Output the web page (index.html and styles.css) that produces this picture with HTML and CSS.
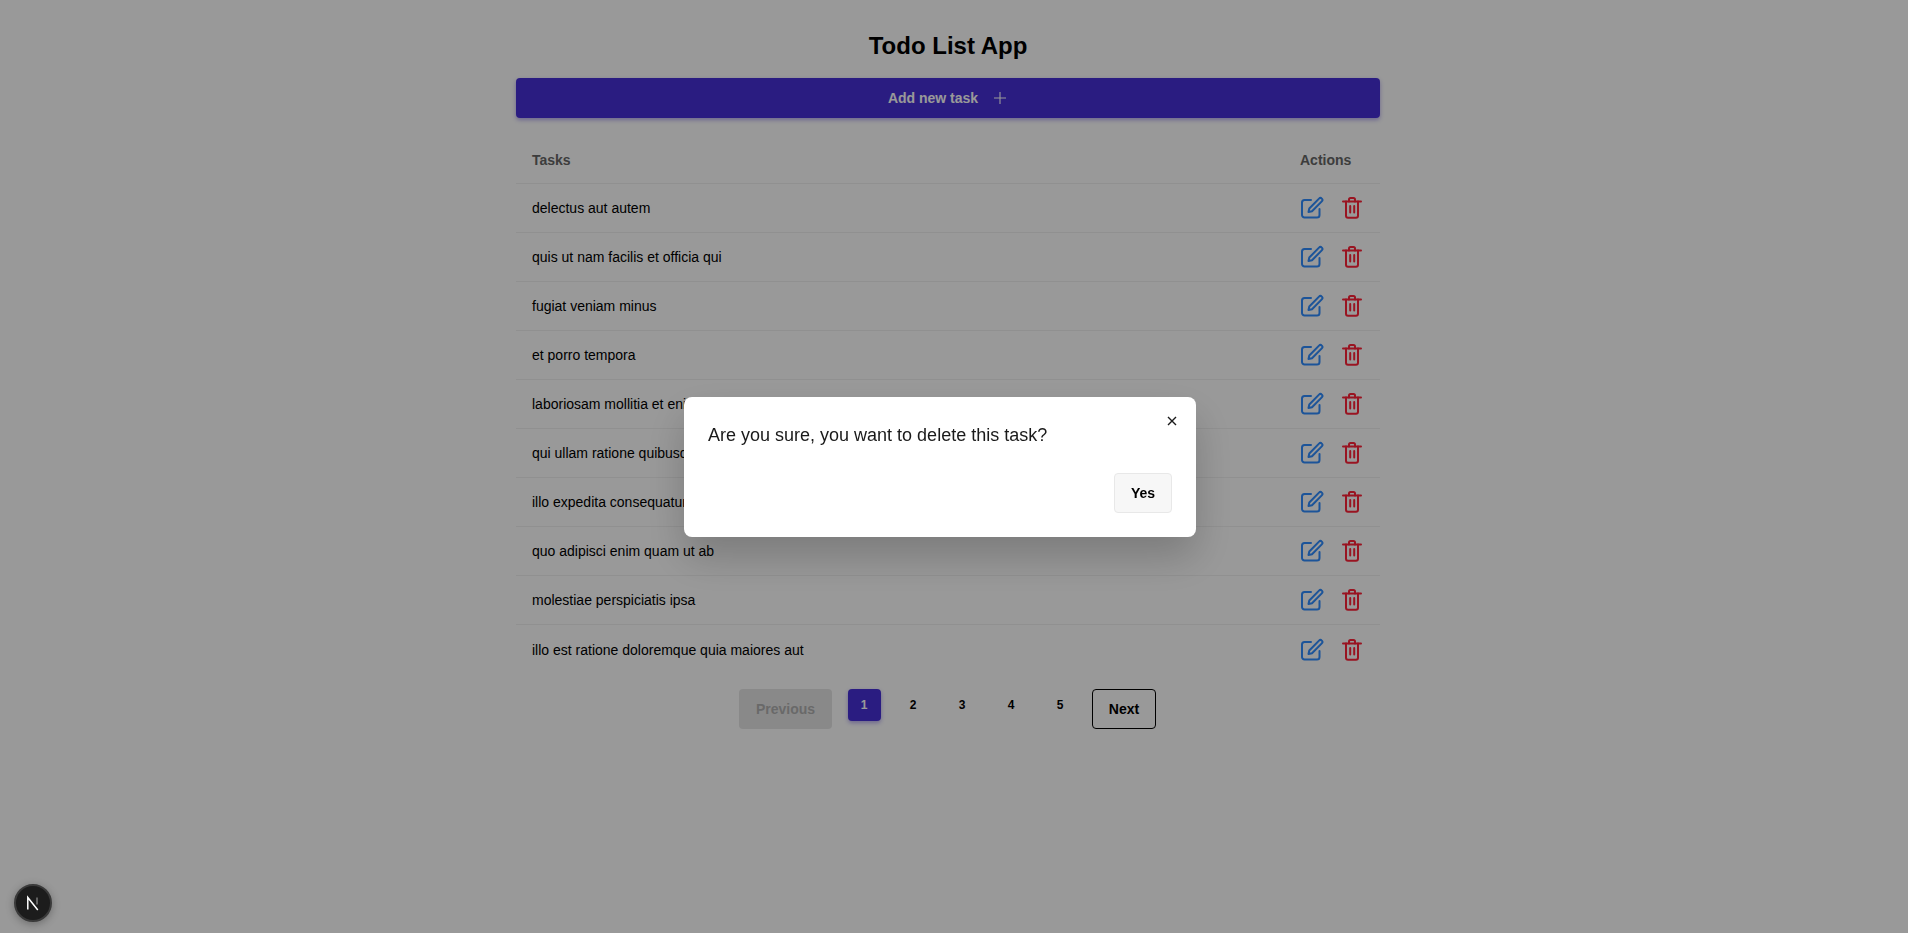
FILE: index.html
```html
<!DOCTYPE html>
<html lang="en">
<head>
    <meta charset="UTF-8">
    <title>Todo List App</title>
    <link rel="stylesheet" href="styles.css">
</head>
<body>
    <main class="container">
        <h1>Todo List App</h1>
        <button class="add-btn">Add new task
            <svg width="16" height="16" viewBox="0 0 16 16" fill="none" stroke="currentColor" stroke-width="1.1"><path d="M8 2v12M2 8h12"/></svg>
        </button>

        <div class="table-head">
            <span>Tasks</span>
            <span class="actions-title">Actions</span>
        </div>

        <div id="rows"></div>

        <div class="pagination">
            <button class="prev">Previous</button>
            <div class="pages">
                <button class="page active">1</button>
                <button class="page">2</button>
                <button class="page">3</button>
                <button class="page">4</button>
                <button class="page">5</button>
            </div>
            <button class="next">Next</button>
        </div>
    </main>

    <div class="overlay">
        <div class="modal">
            <svg class="close" width="12" height="12" viewBox="0 0 12 12" fill="none" stroke="#1a1a1a" stroke-width="1.4"><path d="M2 2l8 8M10 2l-8 8"/></svg>
            <p>Are you sure, you want to delete this task?</p>
            <div class="modal-foot">
                <button class="yes">Yes</button>
            </div>
        </div>
    </div>

    <div class="next-badge">
        <svg width="16" height="16" viewBox="0 0 16 16" fill="none"><path d="M2.8 14.5V2.5l10 12.5" stroke="#fff" stroke-width="1.5"/><path d="M12 2.5v7" stroke="#888" stroke-width="1.3"/></svg>
    </div>

    <script>
        const tasks = [
            'delectus aut autem',
            'quis ut nam facilis et officia qui',
            'fugiat veniam minus',
            'et porro tempora',
            'laboriosam mollitia et enim quasi adipisci quia provident illum',
            'qui ullam ratione quibusdam voluptatem quia omnis',
            'illo expedita consequatur quia in',
            'quo adipisci enim quam ut ab',
            'molestiae perspiciatis ipsa',
            'illo est ratione doloremque quia maiores aut'
        ];

        const editIcon = '<svg width="24" height="24" viewBox="0 0 24 24" fill="none" stroke="#2f8cff" stroke-width="2" stroke-linecap="round" stroke-linejoin="round"><path d="M11 4H4.500A2.500 2.500 0 0 0 2 6.500v12.500a2.500 2.500 0 0 0 2.500 2.500H17a2.500 2.500 0 0 0 2.500-2.500v-6"/><path d="M19 2.600a1.900 1.900 0 0 1 2.800 2.800L12 15.200 8.500 16l.8-3.500z"/></svg>';
        const trashIcon = '<svg width="24" height="24" viewBox="0 0 24 24" fill="none" stroke="#ff2238" stroke-width="2" stroke-linecap="round" stroke-linejoin="round"><path d="M3 5.500h18"/><path d="M6 5.500V19.700a2 2 0 0 0 2 2h8a2 2 0 0 0 2-2V5.500"/><path d="M9 5.500V3.500A1.500 1.500 0 0 1 10.500 2h3A1.500 1.500 0 0 1 15 3.500v2"/><path d="M10.200 10v6.500M14.200 10v6.500"/></svg>';

        // 生成任务行
        document.getElementById('rows').innerHTML = tasks.map(t =>
            '<div class="row"><span>' + t + '</span><div class="icons">' + editIcon + trashIcon + '</div></div>'
        ).join('');
    </script>
</body>
</html>
```
FILE: styles.css
```css
* {
    box-sizing: border-box;
}

body {
    margin: 0;
    height: 933px;
    overflow: hidden;
    background: #fff;
    font-family: "Liberation Sans", Arial, sans-serif;
    color: #000;
}

button {
    font-family: inherit;
}

.container {
    width: 864px;
    margin-left: 516px;
}

h1 {
    margin: 0;
    padding-top: 30px;
    height: 78px;
    font-size: 24px;
    line-height: 32px;
    font-weight: 700;
    text-align: center;
}

.add-btn {
    width: 100%;
    height: 40px;
    display: flex;
    align-items: center;
    justify-content: center;
    gap: 14px;
    border: none;
    border-radius: 4px;
    background: #4730d8;
    color: #fff;
    font-size: 14px;
    font-weight: 700;
    box-shadow: 0 2px 4px rgba(71, 48, 216, 0.4);
}

.table-head {
    display: flex;
    justify-content: space-between;
    align-items: center;
    margin-top: 24px;
    height: 42px;
    padding: 0 16px 5px;
    border-bottom: 1px solid #f1f1f1;
    font-size: 14px;
    font-weight: 700;
    color: #666;
}

.actions-title {
    width: 64px;
    white-space: nowrap;
}

.row {
    display: flex;
    justify-content: space-between;
    align-items: center;
    height: 49px;
    padding: 0 16px;
    border-bottom: 1px solid #f1f1f1;
    font-size: 14px;
}

.row:last-child {
    border-bottom: none;
}

.icons {
    display: flex;
    gap: 16px;
}

.pagination {
    display: flex;
    justify-content: center;
    align-items: flex-start;
    gap: 15.5px;
    margin-top: 15px;
    padding-right: 1px;
}

.prev,
.next {
    height: 40px;
    border-radius: 4px;
    font-size: 14px;
    font-weight: 700;
}

.prev {
    width: 93px;
    border: none;
    background: #e5e5e5;
    color: #b0b0b0;
}

.next {
    width: 64px;
    border: 1px solid #000;
    background: transparent;
    color: #000;
}

.pages {
    display: flex;
    gap: 16px;
}

.page {
    width: 33px;
    height: 32px;
    border: none;
    border-radius: 4px;
    background: transparent;
    font-size: 12px;
    font-weight: 700;
    color: #000;
}

.page.active {
    background: #4730d8;
    color: #fff;
    box-shadow: 0 2px 4px rgba(71, 48, 216, 0.4);
}

.overlay {
    position: fixed;
    inset: 0;
    background: rgba(0, 0, 0, 0.4);
}

.modal {
    position: absolute;
    left: 684px;
    top: 397px;
    width: 512px;
    height: 140px;
    padding: 24px;
    border-radius: 8px;
    background: #fff;
    box-shadow: 0 20px 40px rgba(0, 0, 0, 0.2);
}

.close {
    position: absolute;
    top: 18px;
    right: 18px;
}

.modal p {
    margin: 0;
    font-size: 18px;
    line-height: 28px;
    color: #1a1a1a;
}

.modal-foot {
    display: flex;
    justify-content: flex-end;
    margin-top: 24px;
}

.yes {
    width: 58px;
    height: 40px;
    border: 1px solid #e8e8e8;
    border-radius: 4px;
    background: #f7f7f7;
    font-size: 14px;
    font-weight: 700;
    color: #000;
}

.next-badge {
    position: fixed;
    left: 14px;
    bottom: 11px;
    width: 38px;
    height: 38px;
    display: flex;
    align-items: center;
    justify-content: center;
    border-radius: 50%;
    background: #1c1c1c;
    border: 2px solid #3a3a3a;
    box-shadow: 0 2px 8px rgba(0, 0, 0, 0.3);
}
```
